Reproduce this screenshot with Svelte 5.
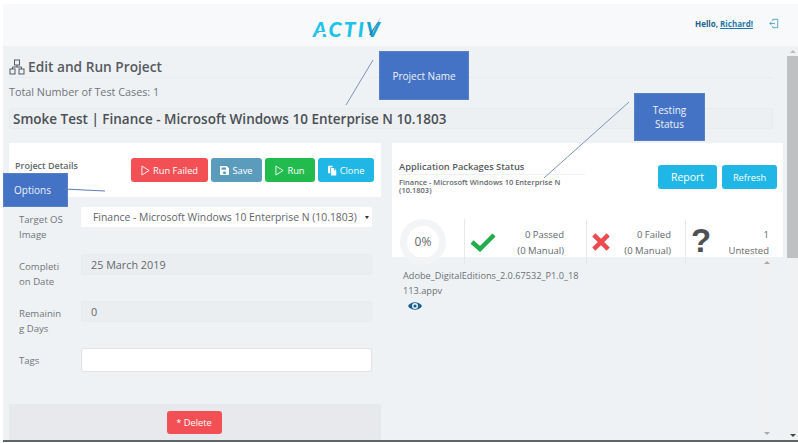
<script>
  const fields = [
    { label: ['Completi', 'on Date'], value: '25 March 2019' },
    { label: ['Remainin', 'g Days'], value: '0' }
  ];
</script>

<div class="page">
  <header class="top">
    <div class="logo">
      <span class="logo-text">ACTI<span class="logo-v">V</span></span>
      <span class="crossbar"></span>
      <svg class="tick" viewBox="0 0 16 20" width="16" height="20"><path d="M3 19 L5 19 L15 1 Z" fill="#1d7fa6" /></svg>
    </div>
    <div class="user">
      <span>Hello, <u>Richard!</u></span>
      <svg viewBox="0 0 12 12" width="10" height="11" fill="none" stroke="#3f9bc4" stroke-width="1"><path d="M4.5 3 V1 H10.5 V11 H4.5 V9 M7 6 H1 M3 4 L1 6 L3 8" /></svg>
    </div>
  </header>

  <div class="body">
    <main class="content">
      <h1>
        <svg viewBox="0 0 16 16" width="16" height="16" fill="none" stroke="#555b61" stroke-width="1"><rect x="5.5" y="1" width="5" height="5" /><rect x="1" y="10" width="5" height="5" /><rect x="10" y="10" width="5" height="5" /><path d="M8 6 V8 M3.5 10 V8 H12.5 V10" /></svg>
        Edit and Run Project
      </h1>
      <p class="total">Total Number of Test Cases: 1</p>
      <div class="name">Smoke Test | Finance - Microsoft Windows 10 Enterprise N 10.1803</div>

      <div class="cards">
        <section class="left">
          <div class="card-head">
            <h2>Project Details</h2>
            <div class="actions">
              <button class="red">
                <svg viewBox="0 0 10 12" width="9" height="11" fill="none" stroke="currentColor"><path d="M1 1 L9 6 L1 11 Z" /></svg>
                Run Failed
              </button>
              <button class="slate">
                <svg viewBox="0 0 12 12" width="9" height="9"><path fill="currentColor" fill-rule="evenodd" d="M1 0 H9 L12 3 V11 A1 1 0 0 1 11 12 H1 A1 1 0 0 1 0 11 V1 A1 1 0 0 1 1 0 Z M2 2 V5 H8 V2 Z M6 7 A2 2 0 1 0 6 11 A2 2 0 1 0 6 7 Z" /></svg>
                Save
              </button>
              <button class="green">
                <svg viewBox="0 0 10 12" width="9" height="11" fill="none" stroke="currentColor"><path d="M1 1 L9 6 L1 11 Z" /></svg>
                Run
              </button>
              <button class="cyan">
                <svg viewBox="0 0 12 13" width="9" height="11"><path fill="currentColor" d="M4 3 H8 V6 H11 V13 H4 Z M0 0 H6 V2 H3 V10 H0 Z M9 3 L11 5 H9 Z" /></svg>
                Clone
              </button>
            </div>
          </div>

          <div class="form">
            <div class="row">
              <span class="label">Target OS<br />Image</span>
              <div class="select">Finance - Microsoft Windows 10 Enterprise N (10.1803)<i class="caret"></i></div>
            </div>
            {#each fields as f}
              <div class="row">
                <span class="label">{f.label[0]}<br />{f.label[1]}</span>
                <div class="readonly">{f.value}</div>
              </div>
            {/each}
            <div class="row">
              <span class="label">Tags</span>
              <div class="input"></div>
            </div>
          </div>

          <div class="card-foot"><button class="red delete">* Delete</button></div>
        </section>

        <section class="right">
          <div class="status">
            <div class="status-head">
              <div class="status-title">
                <h3>Application Packages Status</h3>
                <p>Finance - Microsoft Windows 10 Enterprise N (10.1803)</p>
              </div>
              <button class="cyan big">Report</button>
              <button class="cyan">Refresh</button>
            </div>
            <div class="stats">
              <div class="stat ring-cell"><div class="ring">0%</div></div>
              <div class="stat pass">
                <svg viewBox="0 0 26 20" width="26" height="20"><path d="M2 10 L10 17 L24 3" fill="none" stroke="#22ad4b" stroke-width="4.5" /></svg>
                <span>0 Passed<br />(0 Manual)</span>
              </div>
              <div class="stat fail">
                <svg viewBox="0 0 20 20" width="18" height="18"><path d="M2 2 L18 18 M18 2 L2 18" fill="none" stroke="#ee4a4f" stroke-width="5" /></svg>
                <span>0 Failed<br />(0 Manual)</span>
              </div>
              <div class="stat unknown">
                <b>?</b>
                <span>1<br />Untested</span>
              </div>
            </div>
          </div>
          <div class="packages">
            <div class="package">
              <p>Adobe_DigitalEditions_2.0.67532_P1.0_18 113.appv</p>
              <svg viewBox="0 0 14 10" width="14" height="10"><path fill="#15618f" fill-rule="evenodd" d="M0 5 C3 0 11 0 14 5 C11 10 3 10 0 5 Z M7 2 A3 3 0 1 0 7 8 A3 3 0 1 0 7 2 Z" /><circle cx="7" cy="5" r="1.6" fill="#15618f" /></svg>
            </div>
            <div class="inner-scroll"><i class="up"></i><i class="down"></i></div>
          </div>
        </section>
      </div>
    </main>
    <div class="scrollbar"><i class="up dark"></i><div class="thumb"></div><i class="down dark"></i></div>
  </div>
  <div class="bottom-line"></div>

  <div class="note n-name">Project Name</div>
  <div class="note n-status">Testing<br />Status</div>
  <div class="note n-options">Options</div>
  <svg class="leaders" viewBox="0 0 798 443" width="798" height="443" fill="none" stroke="#7e92bd" stroke-width="1">
    <path d="M373 60 L346 105" />
    <path d="M629 102 L544 178" />
    <path d="M64 189 L105 191" stroke="#5f7cb4" />
  </svg>
</div>

<style>
  :global(body) { margin: 0; background: #fff; }
  * { box-sizing: border-box; }
  .page {
    position: relative;
    width: 798px;
    height: 443px;
    overflow: hidden;
    padding: 4px 0 3px 3px;
    display: flex;
    flex-direction: column;
    font-family: "Open Sans", "Noto Sans", sans-serif;
    color: #6b7075;
    font-size: 10px;
  }
  .top {
    height: 42px;
    flex: none;
    background: #f8f9fa;
    display: flex;
    align-items: center;
    justify-content: flex-end;
    padding-right: 19px;
    position: relative;
  }
  .logo {
    position: absolute;
    left: 310px;
    top: 12px;
    height: 26px;
    width: 70px;
  }
  .logo-text {
    position: absolute;
    left: 0;
    top: 0;
    font: italic 900 21px/26px "Lato", sans-serif;
    letter-spacing: 2.2px;
    color: #1cc3ea;
    white-space: nowrap;
  }
  .logo-v { color: #1aa5d0; }
  .crossbar { position: absolute; left: 6px; top: 15.5px; width: 7px; height: 2.5px; background: #f8f9fa; }
  .tick { position: absolute; left: 53px; top: 0; }
  .user { display: flex; align-items: center; gap: 16px; color: #1b5f8c; font-weight: 700; font-size: 8px; margin-top: -3px; }
  .user u { color: #2478a8; }
  .body { flex: 1; min-height: 0; display: flex; background: #eff2f5; }
  .content { flex: 1; min-width: 0; padding: 0 4px 0 6px; display: flex; flex-direction: column; }
  h1 {
    margin: 0 10px 0 0;
    height: 32px;
    display: flex;
    align-items: center;
    gap: 3px;
    font-size: 13.7px;
    font-weight: 600;
    color: #565b60;
    border-bottom: 1px solid #e9ecef;
    padding-top: 11px;
    padding-bottom: 1px;
  }
  .total { margin: 0; height: 30px; padding-top: 1px; line-height: 25px; font-size: 10.8px; color: #6f7479; }
  .name {
    height: 21px;
    margin-right: 10px;
    padding-left: 3px;
    background: #edf0f2;
    border: 1px solid #e9ecee;
    border-radius: 3px;
    font-size: 13.5px;
    line-height: 21px;
    font-weight: 600;
    color: #4a4f54;
    white-space: nowrap;
  }
  .cards { flex: 1; min-height: 0; margin-top: 14px; display: flex; gap: 11px; }
  .left { width: 372px; flex: none; display: flex; flex-direction: column; }
  .card-head {
    height: 54px;
    flex: none;
    background: #fff;
    display: flex;
    justify-content: space-between;
    padding: 15px 7px 0 6px;
  }
  h2 { margin: 1px 0 0; font-size: 9px; font-weight: 600; color: #63686d; }
  .actions { display: flex; gap: 3px; }
  button {
    height: 24px;
    border: none;
    border-radius: 3px;
    color: #fff;
    font: 400 9.3px "Open Sans", sans-serif;
    padding: 0 6px;
    display: inline-flex;
    align-items: center;
    justify-content: center;
    gap: 3px;
    white-space: nowrap;
  }
  .red { background: #f25055; width: 77px; }
  .slate { background: #5b9bbb; width: 51px; }
  .green { background: #22bb4d; width: 50px; }
  .cyan { background: #20b7e6; width: 56px; }
  .form { flex: 1; min-height: 0; padding: 10px 9px 0 10px; display: flex; flex-direction: column; }
  .row { display: grid; grid-template-columns: 62px 1fr; height: 47px; flex: none; align-items: start; }
  .label { font-size: 9.6px; line-height: 15px; color: #70757a; padding-top: 5px; }
  .select {
    height: 20px;
    background: #fff;
    border-radius: 2px;
    font-size: 10.4px;
    line-height: 20px;
    padding-left: 12px;
    color: #5f6469;
    position: relative;
    white-space: nowrap;
  }
  .caret {
    position: absolute;
    right: 3px;
    top: 9px;
    border: 2.5px solid transparent;
    border-top: 3px solid #333;
    border-bottom: none;
  }
  .readonly {
    height: 21px;
    background: #ebeef0;
    border: 1px solid #e8ebed;
    border-radius: 2px;
    font-size: 10.8px;
    line-height: 19px;
    padding-left: 9px;
    color: #63686d;
  }
  .input { height: 24px; background: #fff; border: 1px solid #dfe3e6; border-radius: 3px; }
  .card-foot {
    height: 36px;
    flex: none;
    background: #e7e9ec;
    display: flex;
    justify-content: center;
    padding: 7px 2px 0 0;
  }
  .delete { width: 55px; height: 23px; }
  .right { flex: 1; min-width: 0; display: flex; flex-direction: column; }
  .status { height: 114px; flex: none; background: #fff; position: relative; padding: 8px 6px 0 7px; }
  .status-head { display: flex; align-items: flex-start; gap: 5px; }
  .status-title { width: 254px; }
  .status-head button { margin-top: 14px; height: 24px; }
  h3 {
    margin: 9px 0 0;
    font-size: 9.3px;
    font-weight: 600;
    color: #565b60;
    border-bottom: 1px solid #eef0f2;
    width: 186px;
    padding-bottom: 1px;
  }
  .status-title p { margin: 3px 0 0; font-size: 7.5px; line-height: 8px; font-weight: 600; color: #63686d; width: 170px; }
  .big { width: 59px; font-size: 10.5px; }
  .status-head .cyan:last-child { width: 55px; }
  .stats {
    position: absolute;
    left: 8px;
    top: 76px;
    height: 45px;
    right: 12px;
    display: grid;
    grid-template-columns: 65px 122px 99px 1fr;
    font-size: 9.5px;
    line-height: 16px;
    color: #63686d;
  }
  .stat { display: flex; align-items: flex-start; justify-content: space-between; border-right: 1px solid #e6e8ea; padding: 8px 5px 0 5px; text-align: right; }
  .pass { padding-right: 22px; }
  .fail { padding-right: 14px; }
  .stat:last-child { border-right: none; padding-right: 2px; }
  .ring-cell { padding: 0; }
  .ring {
    width: 46px;
    height: 46px;
    border-radius: 50%;
    border: 7px solid #f3f4f5;
    font-size: 12px;
    text-align: center;
    line-height: 32px;
    color: #63686d;
    flex: none;
  }
  .pass svg { margin-top: 5px; }
  .fail svg { margin-top: 6px; }
  .unknown b { font: 700 33px/33px "Liberation Sans", sans-serif; color: #4d4f52; margin-top: -3px; }
  .stat span { display: block; }
  .packages { flex: 1; min-height: 0; display: flex; margin: 0 9px 0 8px; }
  .package { flex: 1; padding: 11px 0 0 3px; }
  .package p { margin: 0 0 3px; width: 182px; font-size: 9.2px; line-height: 15px; overflow-wrap: anywhere; color: #6b7075; }
  .package svg { display: block; margin-left: 5px; }
  .inner-scroll {
    width: 11px;
    margin-right: 2px;
    background: #f0f1f2;
    display: flex;
    flex-direction: column;
    justify-content: space-between;
    align-items: center;
    padding: 4px 0 5px;
  }
  .up, .down { display: block; width: 0; height: 0; border: 3px solid transparent; }
  .up { border-bottom: 3px solid #aaa; border-top: none; }
  .down { border-top: 3px solid #aaa; border-bottom: none; }
  .scrollbar {
    width: 11px;
    flex: none;
    background: #f0f1f2;
    display: flex;
    flex-direction: column;
    align-items: center;
    padding: 4px 0 3px;
  }
  .up.dark { border-bottom-color: #bbb; }
  .down.dark { border-top-color: #444; margin-top: auto; }
  .thumb { width: 11px; height: 202px; background: #bfc0c1; margin-top: 3px; }
  .bottom-line { position: absolute; left: 3px; right: 0; bottom: 1px; height: 2px; background: #5f6468; }
  .note {
    position: absolute;
    background: #4472c4;
    border: 1px solid #5a80c4;
    color: #eef2fa;
    font-size: 10px;
    line-height: 14px;
    display: flex;
    align-items: center;
    justify-content: center;
    text-align: center;
  }
  .n-name { left: 379px; top: 51px; width: 90px; height: 49px; }
  .n-status { left: 634px; top: 93px; width: 71px; height: 48px; }
  .n-options { left: 3px; top: 173px; width: 65px; height: 34px; justify-content: flex-start; padding-left: 10px; }
  .leaders { position: absolute; left: 0; top: 0; pointer-events: none; }
</style>
